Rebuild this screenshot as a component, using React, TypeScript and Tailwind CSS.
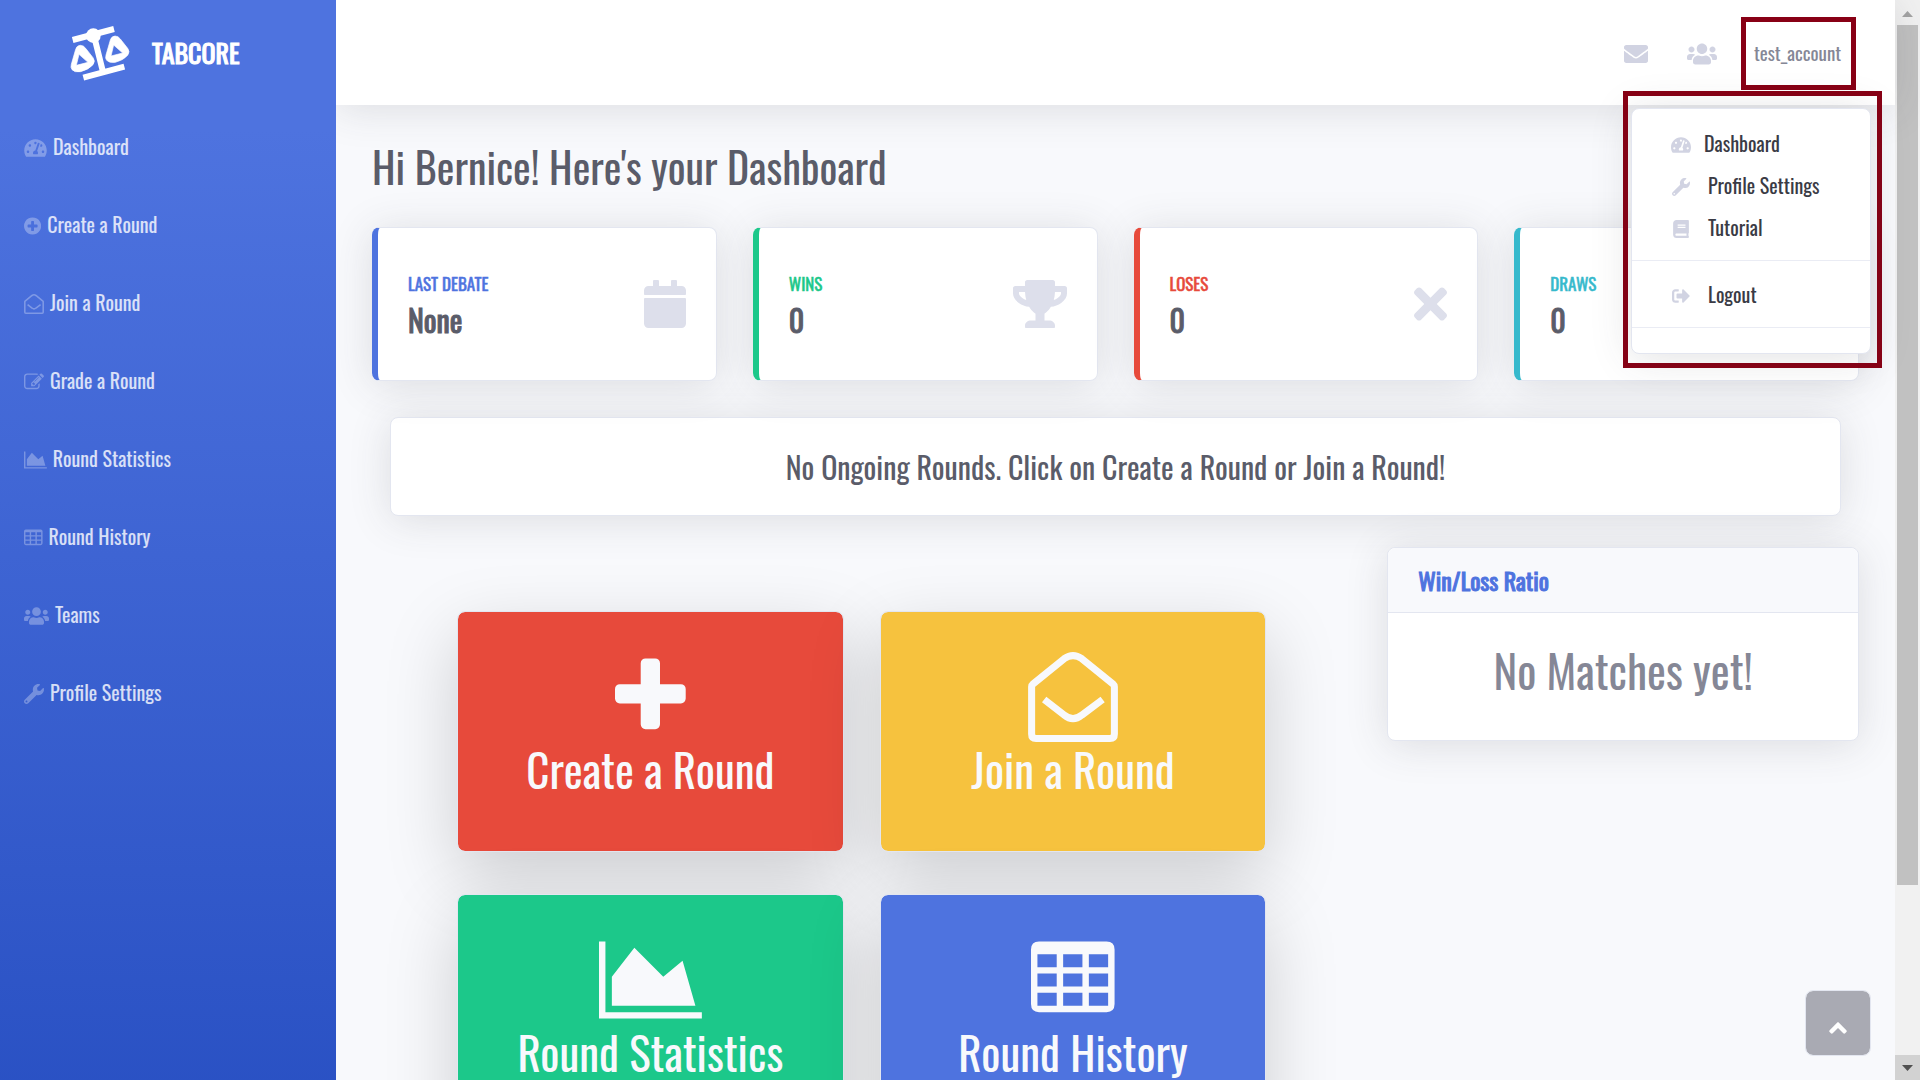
import type { ReactNode } from "react";
import {
  FaAngleUp,
  FaBook,
  FaCalendar,
  FaEnvelope,
  FaSignOutAlt,
  FaTachometerAlt,
  FaTimes,
  FaTrophy,
  FaUsers,
  FaWrench,
} from "react-icons/fa";

type IconProps = { className?: string };

function LogoIcon() {
  const pan =
    "M35 88Q38 77 49 76Q59 76 65 85L87 113Q95 123 87 134Q74 149 50 155Q32 158 24 149Q19 143 22 133ZM45 103L37 136L72 127Z";
  return (
    <svg viewBox="0 0 216 198" className="h-[66px] w-[72px] fill-white stroke-white" aria-hidden="true">
      <path d="M26 60L150 27M58 173L181 140M90 47L117 156" strokeWidth="18" fill="none" />
      <circle cx="88" cy="47" r="22" stroke="none" />
      <path d={pan} fillRule="evenodd" strokeWidth="2" />
      <path d={pan} fillRule="evenodd" strokeWidth="2" transform="translate(104 -28)" />
    </svg>
  );
}

function PlusIcon({ className }: IconProps) {
  return (
    <svg viewBox="192 0 1408 1792" fill="currentColor" className={className} aria-hidden="true">
      <path d="M1600 736v192q0 40-28 68t-68 28h-416v416q0 40-28 68t-68 28h-192q-40 0-68-28t-28-68v-416h-416q-40 0-68-28t-28-68v-192q0-40 28-68t68-28h416v-416q0-40 28-68t68-28h192q40 0 68 28t28 68v416h416q40 0 68 28t28 68z" />
    </svg>
  );
}

function PlusCircleIcon({ className }: IconProps) {
  return (
    <svg viewBox="128 0 1536 1792" fill="currentColor" className={className} aria-hidden="true">
      <path d="M1344 960v-128q0-26-19-45t-45-19h-256v-256q0-26-19-45t-45-19h-128q-26 0-45 19t-19 45v256h-256q-26 0-45 19t-19 45v128q0 26 19 45t45 19h256v256q0 26 19 45t45 19h128q26 0 45-19t19-45v-256h256q26 0 45-19t19-45zm320-64q0 209-103 385.5t-279.5 279.5-385.5 103-385.5-103-279.5-279.5-103-385.5 103-385.5 279.5-279.5 385.5-103 385.5 103 279.5 279.5 103 385.5z" />
    </svg>
  );
}

function EnvelopeOpenIcon({ className }: IconProps) {
  return (
    <svg
      viewBox="0 0 1792 1792"
      fill="none"
      stroke="currentColor"
      strokeWidth="140"
      className={className}
      aria-hidden="true"
    >
      <path d="M72 690Q72 660 100 636L720 134Q896 10 1072 134L1692 636Q1720 660 1720 690V1632Q1720 1722 1632 1722H160Q72 1722 72 1632Z" />
      <path strokeLinejoin="round" d="M322 945L720 1256Q896 1400 1072 1256L1486 945" />
    </svg>
  );
}

function EditIcon({ className }: IconProps) {
  return (
    <svg viewBox="0 0 1792 1792" fill="currentColor" className={className} aria-hidden="true">
      <path d="M888 1184l116-116-152-152-116 116v56h96v96h56zm440-720q-16-16-33 1l-350 350q-17 17-1 33t33-1l350-350q17-17 1-33zm80 594v190q0 119-84.5 203.5t-203.5 84.5h-832q-119 0-203.5-84.5t-84.5-203.5v-832q0-119 84.5-203.5t203.5-84.5h832q63 0 117 25 15 7 18 23 3 17-9 29l-49 49q-14 14-32 8-23-6-45-6h-832q-66 0-113 47t-47 113v832q0 66 47 113t113 47h832q66 0 113-47t47-113v-126q0-13 9-22l64-64q15-15 35-7t20 29zm-96-738l288 288-672 672h-288v-288zm444 132l-92 92-288-288 92-92q28-28 68-28t68 28l152 152q28 28 28 68t-28 68z" />
    </svg>
  );
}

function AreaChartIcon({ className }: IconProps) {
  return (
    <svg viewBox="0 0 2048 1792" fill="currentColor" className={className} aria-hidden="true">
      <path d="M2048 1536v128h-2048v-1536h128v1408h1920zm-384-1024l256 896h-1664v-576l448-576 576 576z" />
    </svg>
  );
}

function TableIcon({ className }: IconProps) {
  return (
    <svg viewBox="0 0 1664 1792" fill="currentColor" fillRule="evenodd" className={className} aria-hidden="true">
      <path d="M160 128H1504Q1664 128 1664 288V1376Q1664 1536 1504 1536H160Q0 1536 0 1376V288Q0 128 160 128ZM128 384V640H512V384ZM640 384V640H1024V384ZM1152 384V640H1536V384ZM128 768V1024H512V768ZM640 768V1024H1024V768ZM1152 768V1024H1536V768ZM128 1152V1408H512V1152ZM640 1152V1408H1024V1152ZM1152 1152V1408H1536V1152Z" />
    </svg>
  );
}

const navItems = [
  { label: "Dashboard", icon: <FaTachometerAlt className="h-5 w-[23px]" /> },
  { label: "Create a Round", icon: <PlusCircleIcon className="h-5 w-auto" /> },
  { label: "Join a Round", icon: <EnvelopeOpenIcon className="h-5 w-auto" /> },
  { label: "Grade a Round", icon: <EditIcon className="h-5 w-auto" /> },
  { label: "Round Statistics", icon: <AreaChartIcon className="h-5 w-auto" /> },
  { label: "Round History", icon: <TableIcon className="h-5 w-auto" /> },
  { label: "Teams", icon: <FaUsers className="h-5 w-[25px]" /> },
  { label: "Profile Settings", icon: <FaWrench className="size-5" /> },
];

const stats = [
  { label: "LAST DEBATE", value: "None", edge: "border-l-[#4e73df]", text: "text-[#4e73df]", icon: <FaCalendar className="h-12 w-[42px]" /> },
  { label: "WINS", value: "0", edge: "border-l-[#1cc88a]", text: "text-[#1cc88a]", icon: <FaTrophy className="h-12 w-[54px]" /> },
  { label: "LOSES", value: "0", edge: "border-l-[#e74a3b]", text: "text-[#e74a3b]", icon: <FaTimes className="h-12 w-[33px]" /> },
  { label: "DRAWS", value: "0", edge: "border-l-[#36b9cc]", text: "text-[#36b9cc]", icon: null },
];

const tileIcon = "h-[90px] w-auto";

const tiles = [
  { label: "Create a Round", bg: "bg-[#e74a3b]", icon: <PlusIcon className={tileIcon} /> },
  { label: "Join a Round", bg: "bg-[#f6c23e]", icon: <EnvelopeOpenIcon className={tileIcon} /> },
  { label: "Round Statistics", bg: "bg-[#1cc88a]", icon: <AreaChartIcon className={tileIcon} /> },
  { label: "Round History", bg: "bg-[#4e73df]", icon: <TableIcon className={tileIcon} /> },
];

function Sidebar() {
  return (
    <aside className="relative z-10 w-[336px] shrink-0 bg-[linear-gradient(180deg,#4e73df_12%,#224abe_120%)]">
      <a href="#home" className="flex h-[105px] items-center gap-4 pl-16 text-white">
        <LogoIcon />
        <span className="text-[26px] leading-8 [-webkit-text-stroke:1px]">TABCORE</span>
      </a>
      <nav className="pt-0.5">
        {navItems.map((item) => (
          <a key={item.label} href="#nav" className="flex h-[78px] items-center gap-1.5 px-6 text-xl text-white/80">
            <span className="mt-1 text-white/30">{item.icon}</span>
            <span>{item.label}</span>
          </a>
        ))}
      </nav>
    </aside>
  );
}

function MenuItem({ icon, label, wide = true }: { icon: ReactNode; label: string; wide?: boolean }) {
  return (
    <a href="#menu" className="flex h-[42px] items-center pl-[37px] text-xl text-[#3a3b45]">
      <span className="mt-1 flex w-[23px] justify-center text-[#d1d3e2]">{icon}</span>
      <span className={wide ? "ml-4" : "ml-3"}>{label}</span>
    </a>
  );
}

function AccountMenu() {
  return (
    <div className="absolute top-[91px] right-[13px] z-20 border-[5px] border-[#880015] pt-3 pr-1.5 pb-[9px] pl-[3px]">
      <div className="w-60 rounded-lg border border-[#e3e6f0] bg-white py-[13px] shadow-[0_4px_42px_rgba(58,59,69,0.15)]">
        <MenuItem wide={false} label="Dashboard" icon={<FaTachometerAlt className="h-[18px] w-5" />} />
        <MenuItem label="Profile Settings" icon={<FaWrench className="size-[18px]" />} />
        <MenuItem label="Tutorial" icon={<FaBook className="h-[18px] w-4" />} />
        <hr className="my-3 border-t border-[#eaecf4]" />
        <MenuItem label="Logout" icon={<FaSignOutAlt className="size-[18px]" />} />
        <hr className="my-3 border-t border-[#eaecf4]" />
      </div>
    </div>
  );
}

function Topbar() {
  return (
    <header className="relative flex h-[105px] items-center justify-end bg-white pt-0.5 pr-[39px] shadow-[0_4px_42px_rgba(58,59,69,0.15)]">
      <button type="button" aria-label="Messages" className="mr-[39px] text-[#d1d3e2]">
        <FaEnvelope className="size-6" />
      </button>
      <button type="button" aria-label="Teams" className="mr-6 text-[#d1d3e2]">
        <FaUsers className="h-6 w-[30px]" />
      </button>
      <button
        type="button"
        className="flex h-[73px] w-[115px] items-center justify-center border-[5px] border-[#880015] pr-0.5 pb-0.5 text-[19px] text-[#858796]"
      >
        test_account
      </button>
      <AccountMenu />
    </header>
  );
}

function Scrollbar() {
  return (
    <div className="flex w-[25px] shrink-0 flex-col bg-[#f1f1f1]" aria-hidden="true">
      <div className="flex h-[25px] shrink-0 items-center justify-center">
        <svg viewBox="0 0 11 6" className="mt-0.5 h-1.5 w-[11px] fill-[#a3a3a3]">
          <path d="M5.500 0L11 6H0Z" />
        </svg>
      </div>
      <div className="mx-0.5 flex-[860] bg-[#c1c1c1]" />
      <div className="flex-[170]" />
      <div className="flex h-[25px] shrink-0 items-center justify-center bg-[#d2d2d2]">
        <svg viewBox="0 0 11 6" className="h-1.5 w-[11px] fill-[#505050]">
          <path d="M0 0H11L5.500 6Z" />
        </svg>
      </div>
    </div>
  );
}

export default function App() {
  return (
    <div className="relative flex h-screen overflow-hidden bg-[#f8f9fc] font-['Oswald','Roboto_Condensed',sans-serif] font-normal">
      <Sidebar />
      <div className="min-w-0 flex-1">
        <Topbar />
        <main className="relative px-9 pt-9">
          <h1 className="mb-9 text-[42px] leading-[50px] text-[#5a5c69]">Hi Bernice! Here's your Dashboard</h1>

          <section className="mb-9 grid grid-cols-4 gap-9">
            {stats.map((s) => (
              <div
                key={s.label}
                className={`flex h-[154px] items-center justify-between rounded-lg border border-l-[6px] border-[#e3e6f0] bg-white px-[30px] shadow-[0_4px_42px_rgba(58,59,69,0.15)] ${s.edge}`}
              >
                <div>
                  <div className={`mb-1.5 text-[17px] leading-[25px] [-webkit-text-stroke:0.5px] ${s.text}`}>{s.label}</div>
                  <div className="text-[30px] leading-9 text-[#5a5c69] [-webkit-text-stroke:1px]">{s.value}</div>
                </div>
                <div className="text-[#dddfeb]">{s.icon}</div>
              </div>
            ))}
          </section>

          <section className="mx-[18px] flex h-[99px] items-center justify-center rounded-lg border border-[#e3e6f0] bg-white text-[30px] leading-9 text-[#5a5c69] shadow-[0_4px_42px_rgba(58,59,69,0.15)]">
            No Ongoing Rounds. Click on Create a Round or Join a Round!
          </section>

          <div className="mt-[31px] grid grid-cols-3 gap-9">
            <section className="order-2 self-start rounded-lg border border-[#e3e6f0] bg-white shadow-[0_4px_42px_rgba(58,59,69,0.15)]">
              <h2 className="flex h-[65px] items-center rounded-t-lg border-b border-[#e3e6f0] bg-[#f8f9fc] px-[30px] text-2xl leading-7 text-[#4e73df] [-webkit-text-stroke:1px]">
                Win/Loss Ratio
              </h2>
              <p className="flex h-[127px] items-center justify-center pb-3.5 text-[45px] leading-[54px] text-[#858796]">
                No Matches yet!
              </p>
            </section>
            <section className="col-span-2 grid grid-cols-2 gap-x-9 gap-y-[42px] px-[85px] pt-16">
              {tiles.map((t) => (
                <a
                  key={t.label}
                  href="#tile"
                  className={`relative flex h-[241px] flex-col items-center rounded-lg border border-[#e3e6f0] bg-clip-padding pt-10 text-[#f8f9fc] shadow-[0_24px_72px_rgba(0,0,0,0.175)] ${t.bg}`}
                >
                  {t.icon}
                  <span className="text-[45px] leading-[54px]">{t.label}</span>
                </a>
              ))}
            </section>
          </div>
        </main>
      </div>
      <Scrollbar />
      <button
        type="button"
        aria-label="Scroll to top"
        className="absolute right-[49px] bottom-6 z-30 flex size-[66px] items-center justify-center rounded-lg border border-[#e3e6f0] bg-[#5a5c69]/50 bg-clip-padding pt-2.5 text-white"
      >
        <FaAngleUp className="h-7 w-[18px]" />
      </button>
    </div>
  );
}
